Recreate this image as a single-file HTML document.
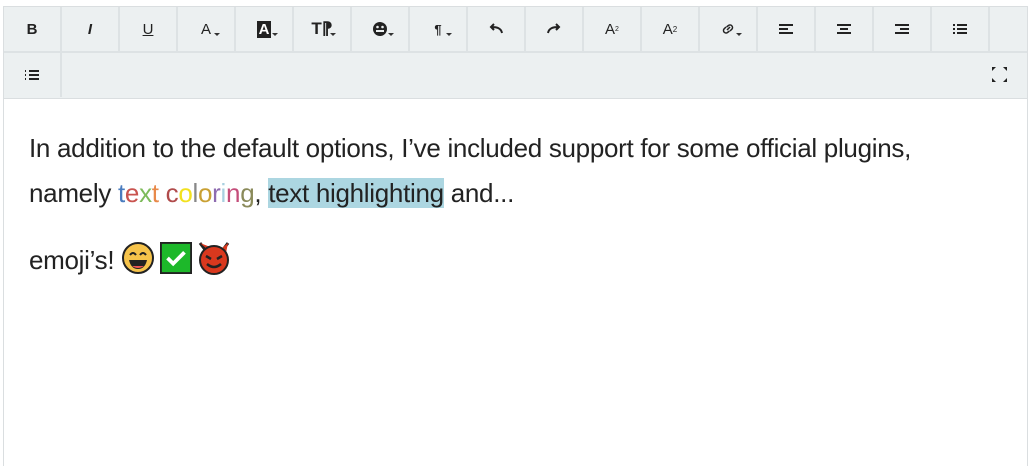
<!DOCTYPE html>
<html><head><meta charset="utf-8"><style>
*{box-sizing:border-box;margin:0;padding:0}
body{width:1034px;height:466px;background:#fff;font-family:"Liberation Sans",sans-serif;position:relative;overflow:hidden}
.tb{position:absolute;left:3px;top:6px;width:1025px;height:93px;background:#ecf0f1;border:1px solid #dadee0;border-bottom:1px solid #dadee0}
.row{position:absolute;left:0;height:46px;display:flex}
.r1{top:0;border-bottom:2px solid #dde2e4;width:100%}
.r2{top:46px;width:100%}
.b{width:58px;height:44px;border-right:2px solid #dde2e4;display:flex;align-items:center;justify-content:center;font-size:15px;color:#222;position:relative}
.car::after{content:"";position:absolute;right:14px;bottom:12px;border:3px solid transparent;border-top:3px solid #333}
.ed{position:absolute;left:3px;top:99px;width:1025px;height:367px;border-left:1px solid #dadee0;border-right:1px solid #dadee0}
.t{position:absolute;left:28px;font-size:26px;color:#222;letter-spacing:-0.3px;white-space:nowrap}
.e{display:inline-block;width:34px;height:34px;vertical-align:-6px;margin-right:5px}
svg{display:block}
</style></head><body>
<div class="tb">
<div class="row r1">
<div class="b"><b>B</b></div>
<div class="b"><i style="font-weight:bold">I</i></div>
<div class="b"><u>U</u></div>
<div class="b car">A</div>
<div class="b car"><span style="background:#222;color:#fff;padding:0 2px;font-weight:bold">A</span></div>
<div class="b car"><b style="font-size:17px">T&#8267;</b></div>
<div class="b car"><svg width="16" height="16" viewBox="0 0 16 16"><circle cx="8" cy="8" r="7" fill="#222"/><circle cx="5.5" cy="6" r="1.3" fill="#ecf0f1"/><circle cx="10.5" cy="6" r="1.3" fill="#ecf0f1"/><rect x="4" y="9" width="8" height="2" fill="#ecf0f1"/></svg></div>
<div class="b car"><b style="font-size:13px">&para;</b></div>
<div class="b"><svg width="14" height="12" viewBox="0 0 14 12"><path d="M13 10C12 5 8 4 2 4M5 1L2 4l3 3" stroke="#222" stroke-width="2" fill="none"/></svg></div>
<div class="b"><svg width="14" height="12" viewBox="0 0 14 12"><path d="M1 10C2 5 6 4 12 4M9 1l3 3-3 3" stroke="#222" stroke-width="2" fill="none"/></svg></div>
<div class="b">A<sup style="font-size:7px">2</sup></div>
<div class="b">A<sub style="font-size:8px">2</sub></div>
<div class="b car"><svg width="16" height="16" viewBox="0 0 16 16"><path d="M7 9l3-3M6 6L4 8a2.5 2.5 0 003.5 3.5L9.5 10M10 10l2-2A2.5 2.5 0 008.5 4.5L6.5 6" stroke="#222" stroke-width="1.5" fill="none"/></svg></div>
<div class="b"><svg width="14" height="10"><rect y="0" width="14" height="2" fill="#222"/><rect y="4" width="9" height="2" fill="#222"/><rect y="8" width="14" height="2" fill="#222"/></svg></div>
<div class="b"><svg width="14" height="10"><rect y="0" width="14" height="2" fill="#222"/><rect x="3" y="4" width="8" height="2" fill="#222"/><rect y="8" width="14" height="2" fill="#222"/></svg></div>
<div class="b"><svg width="14" height="10"><rect y="0" width="14" height="2" fill="#222"/><rect x="5" y="4" width="9" height="2" fill="#222"/><rect y="8" width="14" height="2" fill="#222"/></svg></div>
<div class="b"><svg width="14" height="10"><rect y="0" width="2" height="2" fill="#222"/><rect x="4" y="0" width="10" height="2" fill="#222"/><rect y="4" width="2" height="2" fill="#222"/><rect x="4" y="4" width="10" height="2" fill="#222"/><rect y="8" width="2" height="2" fill="#222"/><rect x="4" y="8" width="10" height="2" fill="#222"/></svg></div>
</div>
<div class="row r2">
<div class="b"><svg width="14" height="10"><rect y="0" width="1" height="2" fill="#222"/><rect x="4" y="0" width="10" height="2" fill="#222"/><rect y="4" width="1" height="2" fill="#222"/><rect x="4" y="4" width="10" height="2" fill="#222"/><rect y="8" width="1" height="2" fill="#222"/><rect x="4" y="8" width="10" height="2" fill="#222"/></svg></div>
<div style="position:absolute;right:19px;top:13px"><svg width="17" height="17" viewBox="0 0 17 17"><path d="M1 1h4L1 5zM16 1h-4l4 4zM1 16h4L1 12zM16 16h-4l4-4z" fill="#222"/></svg></div>
</div>
</div>
<div class="ed">
<div class="t" style="top:34px;left:25px">In addition to the default options, I’ve included support for some official plugins,</div>
<div class="t" style="top:79px;left:25px">namely <span style="color:#4a7cbf">t</span><span style="color:#c9534f">e</span><span style="color:#7dbb5a">x</span><span style="color:#e8894a">t</span> <span style="color:#b04b4b">c</span><span style="color:#f2e11f">o</span><span style="color:#888">l</span><span style="color:#c9a033">o</span><span style="color:#8e6bb0">r</span><span style="color:#a8d0e0">i</span><span style="color:#c44d7a">n</span><span style="color:#8a8a5a">g</span>, <span style="background:#acd6e1">text highlighting</span> and...</div>
<div class="t" style="top:142px;left:25px">emoji’s! <svg class="e" viewBox="0 0 34 34" style="display:inline-block"><circle cx="17" cy="17" r="15" fill="#f6c34a" stroke="#222" stroke-width="2"/><path d="M9 14q3-4 6 0M19 14q3-4 6 0" stroke="#222" stroke-width="2" fill="none"/><path d="M8 19h18q-2 9-9 9t-9-9z" fill="#222"/><path d="M11 25q6 4 12 0" fill="#e55"/></svg><svg class="e" viewBox="0 0 34 34" style="display:inline-block;width:32px"><rect x="1" y="1" width="32" height="32" fill="#1db82a" stroke="#222" stroke-width="2"/><path d="M8 17l6 6 12-12" stroke="#fff" stroke-width="4" fill="none"/></svg><svg class="e" viewBox="0 0 34 34" style="display:inline-block"><path d="M3 2l6 8M31 2l-6 8" stroke="#222" stroke-width="3"/><path d="M3 2l7 6 7-2 7 2 7-6-2 10z" fill="#d9381e"/><circle cx="17" cy="19" r="14" fill="#d9381e" stroke="#222" stroke-width="2"/><path d="M9 15l5 3M25 15l-5 3" stroke="#222" stroke-width="2.5"/><path d="M10 23q7 6 14 0" stroke="#222" stroke-width="2.5" fill="none"/></svg></div>
</div>
</body></html>
